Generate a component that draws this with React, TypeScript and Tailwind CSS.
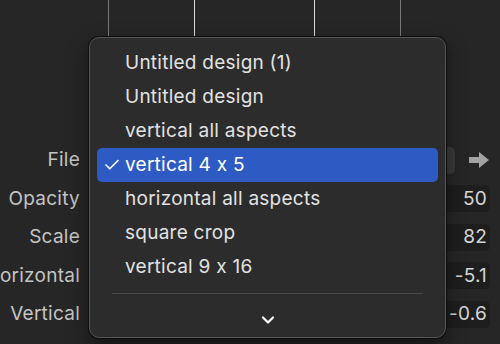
import { Check, ChevronDown } from 'lucide-react';

const items = [
  'Untitled design (1)',
  'Untitled design',
  'vertical all aspects',
  'vertical 4 x 5',
  'horizontal all aspects',
  'square crop',
  'vertical 9 x 16',
];

const rows = [
  { label: 'File', value: null },
  { label: 'Opacity', value: '50' },
  { label: 'Scale', value: '82' },
  { label: 'Horizontal', value: '-5.1' },
  { label: 'Vertical', value: '-0.6' },
];

const selected = 'vertical 4 x 5';

function Arrow() {
  return (
    <svg width="20" height="16" viewBox="0 0 20 16" fill="#a3a3a3">
      <path d="M0 5h10V0l10 8-10 8v-5H0z" />
    </svg>
  );
}

export default function App() {
  return (
    <div
      className="relative w-[500px] h-[344px] overflow-hidden bg-[#262626] text-[19px] tracking-[0.25px] [font-feature-settings:'calt'_0]"
      style={{ fontFamily: 'Inter, "Liberation Sans", sans-serif' }}
    >
      {/* guide lines above the panel */}
      <div className="flex h-[37px]">
        <div className="w-[108px]" />
        <div className="flex w-[293px] border-x border-[#7a7a7a]">
          <div className="w-[85px]" />
          <div className="w-[121px] border-x border-[#d8d8d8]" />
        </div>
      </div>

      {/* inspector rows */}
      <div className="mt-[104px] flex flex-col">
        {rows.map((r) => (
          <div key={r.label} className="flex h-[38.5px] items-center">
            <div className="w-[80px] overflow-hidden whitespace-nowrap flex justify-end text-[#c4c4c4]">
              {r.label}
            </div>
            <div className="flex-1" />
            {r.value === null ? (
              <div className="flex items-center gap-[14px] pr-[11px]">
                <div className="w-[10px] h-[27px] rounded-r-[5px] bg-[#3a3a3a]" />
                <Arrow />
              </div>
            ) : (
              <div className="mr-[10px] w-[46px] h-[27px] rounded-[5px] bg-[#1e1e1e] flex items-center justify-end pr-[3px] text-[#d6d6d6]">
                {r.value}
              </div>
            )}
          </div>
        ))}
      </div>

      {/* popup menu */}
      <div className="absolute left-[89px] top-[37px] w-[357px] h-[301px] rounded-[10px] bg-[#2c2c2c] border border-[#565656] shadow-[0_0_0_1px_#0e0e0e,0_8px_20px_rgba(0,0,0,0.5)] pt-[8px] flex flex-col">
        {items.map((it) => {
          const on = it === selected;
          return (
            <div
              key={it}
              className={
                on
                  ? 'mx-[7px] h-[34px] rounded-[5px] bg-[#2d5bc3] flex items-center text-white'
                  : 'mx-[7px] h-[34px] rounded-[5px] flex items-center text-[#e2e2e2]'
              }
            >
              <div className="w-[28px] flex justify-center pl-[2px]">
                {on && <Check size={18} strokeWidth={2.2} />}
              </div>
              <span className="whitespace-nowrap">{it}</span>
            </div>
          );
        })}
        <div className="mx-[22px] mt-[9px] h-px bg-[#4a4a4a]" />
        <div className="flex-1 flex items-center justify-center pt-[9px] text-white">
          <ChevronDown size={20} strokeWidth={2.6} />
        </div>
      </div>
    </div>
  );
}
